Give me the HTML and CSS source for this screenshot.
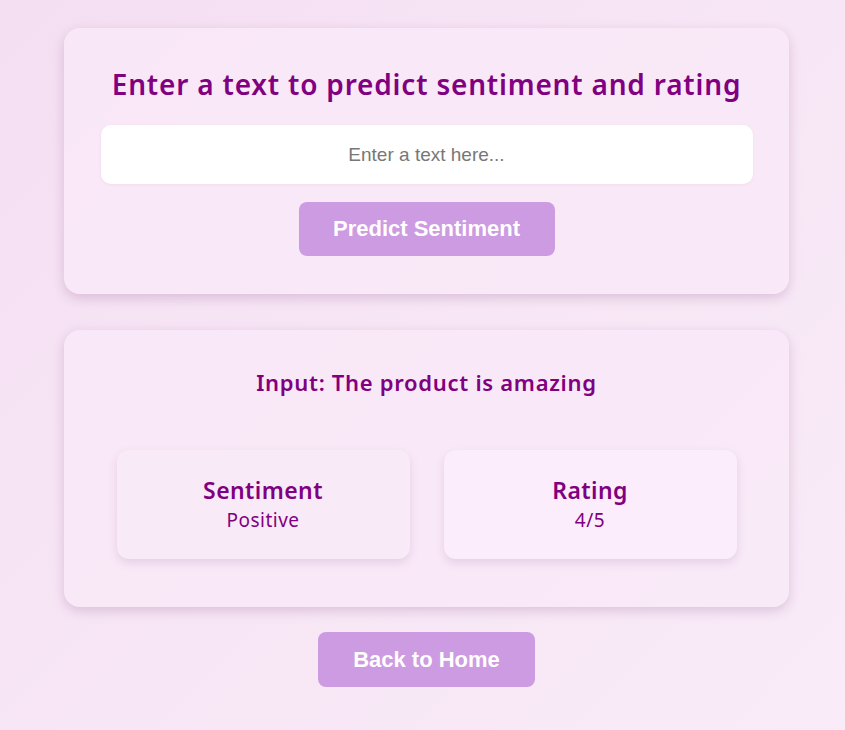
FILE: index.html
```html
<!DOCTYPE html>
<html lang="en">
<head>
<meta charset="utf-8">
<title>Sentiment</title>
<link rel="stylesheet" href="styles.css">
</head>
<body>
<main class="page">
  <section class="card card-form">
    <h1 class="title">Enter a text to predict sentiment and rating</h1>
    <input class="text-input" type="text" placeholder="Enter a text here...">
    <button class="btn btn-predict">Predict Sentiment</button>
  </section>
  <section class="card card-result">
    <h2 class="input-line">Input: The product is amazing</h2>
    <div class="results">
      <div class="result-box">
        <h3 class="result-label">Sentiment</h3>
        <p class="result-value">Positive</p>
      </div>
      <div class="result-box">
        <h3 class="result-label">Rating</h3>
        <p class="result-value">4/5</p>
      </div>
    </div>
  </section>
  <button class="btn btn-back">Back to Home</button>
</main>
</body>
</html>
```
FILE: styles.css
```css
* { box-sizing: border-box; }
html, body { height: 100%; }
body {
  margin: 0;
  background: linear-gradient(135deg, #f4def2 0%, #f7e6f5 50%, #f9ebf8 100%);
  font-family: "Noto Sans", "Open Sans", sans-serif;
  color: #800080;
}
.page {
  display: flex;
  flex-direction: column;
  align-items: center;
  padding-top: 28px;
  padding-left: 8px;
}
.card {
  width: 725px;
  background: rgba(250, 234, 248, 0.75);
  border-radius: 16px;
  box-shadow: 0 4px 12px rgba(120, 60, 120, 0.22);
  display: flex;
  flex-direction: column;
  align-items: center;
}
.card-form {
  height: 266px;
  padding: 36px 36px 0;
}
.title {
  margin: 0;
  font-size: 28px;
  font-weight: 600;
  line-height: 40px;
  letter-spacing: 0.8px;
}
.text-input {
  margin-top: 21px;
  width: 652px;
  height: 59px;
  border: none;
  border-radius: 10px;
  background: #fff;
  text-align: center;
  font-family: "Liberation Sans", Arial, sans-serif;
  font-size: 19px;
  color: #333;
  outline: none;
  box-shadow: 0 1px 3px rgba(150, 90, 150, 0.08);
}
.text-input::placeholder { color: #777; }
.btn {
  border: none;
  border-radius: 8px;
  background: #cd9be1;
  color: #fff;
  font-family: "Liberation Sans", Arial, sans-serif;
  font-weight: 700;
  font-size: 22px;
  cursor: pointer;
}
.btn-predict {
  margin-top: 18px;
  width: 256px;
  height: 54px;
}
.card-result {
  margin-top: 36px;
  height: 277px;
  padding: 35px 52px 0;
}
.input-line {
  margin: 0;
  font-size: 22px;
  font-weight: 600;
  line-height: 34px;
  letter-spacing: 0.7px;
}
.results {
  margin-top: 51px;
  display: grid;
  grid-template-columns: 293px 293px;
  gap: 34px;
}
.result-box {
  height: 109px;
  border-radius: 12px;
  background: #f9eaf8;
  box-shadow: 0 4px 10px rgba(120, 60, 120, 0.15);
  display: flex;
  flex-direction: column;
  align-items: center;
  justify-content: center;
  padding-bottom: 2px;
}
.result-box + .result-box { background: #fbedfb; }
.result-label {
  margin: 0;
  font-size: 23px;
  font-weight: 600;
  line-height: 30px;
  letter-spacing: 0.4px;
}
.result-value {
  margin: 2px 0 0;
  font-size: 19px;
  font-weight: 400;
  line-height: 26px;
  letter-spacing: 0.5px;
}
.btn-back {
  margin-top: 25px;
  width: 217px;
  height: 55px;
}
```
